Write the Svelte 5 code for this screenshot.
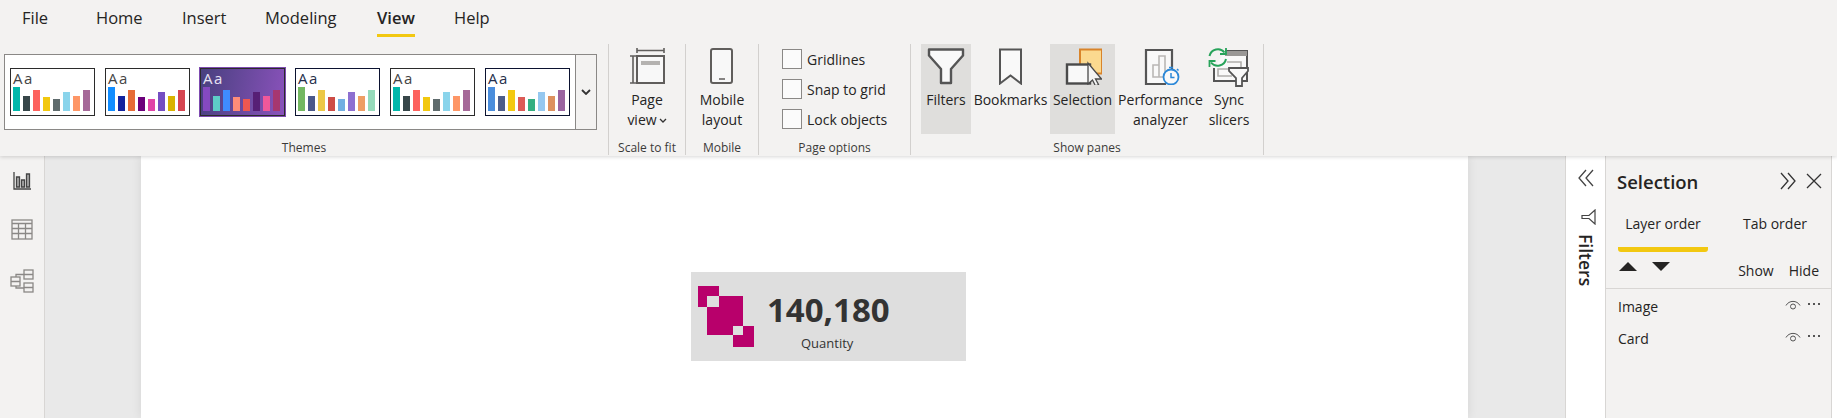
<script>
  const tabs = [
    { label: 'File', width: 74 },
    { label: 'Home', width: 86 },
    { label: 'Insert', width: 83 },
    { label: 'Modeling', width: 112 },
    { label: 'View', width: 77, active: true },
    { label: 'Help', width: 60 },
  ];

  const heights = [24, 15, 21, 14, 12, 19, 15, 21];
  const themes = [
    { colors: ['#01b8aa', '#374649', '#fd625e', '#f2c80f', '#5f6b6d', '#8ad4eb', '#fe9666', '#a66999'] },
    { colors: ['#118dff', '#12239e', '#e66c37', '#6b007b', '#e044a7', '#744ec2', '#d9b300', '#d64550'] },
    { dark: true, colors: ['#8549c0', '#5dcdc7', '#3f8cff', '#ff8c78', '#ee5750', '#571f75', '#f0589a', '#a63770'] },
    { navy: true, colors: ['#73b761', '#4a588a', '#ecc846', '#cd4c46', '#71afe2', '#8d6fd1', '#ee9e64', '#95dabb'] },
    { colors: ['#01b8aa', '#374649', '#fd625e', '#f2c80f', '#5f6b6d', '#8ad4eb', '#fe9666', '#a66999'] },
    { navy: true, colors: ['#4a8ddc', '#4c5d8a', '#f3c911', '#dc5b57', '#33ae81', '#95c8f0', '#dd915f', '#9a64a0'] },
  ];

  const layers = ['Image', 'Card'];
  const options = ['Gridlines', 'Snap to grid', 'Lock objects'];
</script>

<div class="app">
  <header class="ribbon">
    <nav class="tabs">
      {#each tabs as tab}
        <div class="tab" style="width: {tab.width}px">
          <span class="tab__text" class:tab__text--active={tab.active}>{tab.label}</span>
        </div>
      {/each}
    </nav>

    <div class="groups">
      <section class="group group--themes">
        <div class="group__body">
          <div class="gallery">
            <div class="gallery__items">
              {#each themes as theme}
                <div class="theme" class:theme--dark={theme.dark} class:theme--navy={theme.navy}>
                  <span class="theme__aa">Aa</span>
                  <div class="theme__bars">
                    {#each theme.colors as color, i}
                      <i style="height: {heights[i]}px; background: {color}"></i>
                    {/each}
                  </div>
                </div>
              {/each}
            </div>
            <div class="gallery__more">
              <svg width="10" height="6" viewBox="0 0 10 6"><path d="M1 1l4 4 4-4" fill="none" stroke="#333" stroke-width="1.8" /></svg>
            </div>
          </div>
        </div>
        <div class="group__label">Themes</div>
      </section>

      <section class="group group--scale">
        <div class="group__body">
          <div class="cmd">
            <svg class="cmd__icon" width="38" height="38" viewBox="0 0 38 38" fill="none" stroke="#605e5c" stroke-width="1.6">
              <path d="M9 3.500h27M9 1v5M36 1v5M2 9h6M2 36h6M5 9v27" />
              <rect x="9" y="9" width="27" height="27" fill="#f8f8f8" stroke-width="2" />
              <rect x="13" y="14" width="19" height="4" fill="#b5b3b1" stroke="none" />
            </svg>
            <span class="cmd__text">Page<br />view<svg class="caret" width="8" height="5" viewBox="0 0 8 5"><path d="M1 1l3 3 3-3" fill="none" stroke="#333" stroke-width="1.3" /></svg></span>
          </div>
        </div>
        <div class="group__label">Scale to fit</div>
      </section>

      <section class="group group--mobile">
        <div class="group__body">
          <div class="cmd">
            <svg class="cmd__icon" width="38" height="38" viewBox="0 0 38 38" fill="none" stroke="#605e5c" stroke-width="2">
              <rect x="8" y="2" width="21" height="34" rx="2" fill="#f8f8f8" />
              <path d="M16 32h6" stroke-width="1.5" />
            </svg>
            <span class="cmd__text">Mobile<br />layout</span>
          </div>
        </div>
        <div class="group__label">Mobile</div>
      </section>

      <section class="group group--options">
        <div class="group__body options">
          {#each options as option}
            <label class="check"><span class="check__box"></span>{option}</label>
          {/each}
        </div>
        <div class="group__label">Page options</div>
      </section>

      <section class="group group--panes">
        <div class="group__body panes">
          <div class="cmd cmd--on" style="width: 50px">
            <svg class="cmd__icon" width="38" height="38" viewBox="0 0 38 38" fill="#f9f9f9" stroke="#555" stroke-width="2.4">
              <path d="M2 2.500h34v6L24 22v14h-10V22L2 8.500z" stroke-linejoin="round" />
            </svg>
            <span class="cmd__text">Filters</span>
          </div>
          <div class="cmd" style="width: 79px">
            <svg class="cmd__icon" width="38" height="38" viewBox="0 0 38 38" fill="#f9f9f9" stroke="#555" stroke-width="2">
              <path d="M8 2.500h21v34l-10.500-8-10.500 8z" />
            </svg>
            <span class="cmd__text">Bookmarks</span>
          </div>
          <div class="cmd cmd--on" style="width: 65px">
            <svg class="cmd__icon" width="38" height="38" viewBox="0 0 38 38">
              <rect x="16" y="2.500" width="22" height="24" fill="#fbd98f" stroke="#d9842a" stroke-width="2" />
              <rect x="3" y="17.500" width="23" height="19" fill="#f9f9f9" stroke="#4a4a4a" stroke-width="2.4" />
              <path d="M24 16v21l4.500-4 3 6 3-1.500-3-5.500h6z" fill="#f4f4f4" stroke="#4a4a4a" stroke-width="1.3" />
            </svg>
            <span class="cmd__text">Selection</span>
          </div>
          <div class="cmd" style="width: 91px">
            <svg class="cmd__icon" width="38" height="38" viewBox="0 0 38 38" fill="none">
              <path d="M30 28V3H4v34h20" fill="#f9f9f9" stroke="#555" stroke-width="2.200" />
              <path d="M11 30V18h6v12zM17 30V9h6v21z" stroke="#b9b7b5" stroke-width="1.600" />
              <circle cx="29" cy="30" r="7.500" fill="#f9f9f9" stroke="#2b88d8" stroke-width="1.800" />
              <path d="M29 26v4.500h3.500M27 20.500h4M35 22l1.500 1.500" stroke="#2b88d8" stroke-width="1.500" />
            </svg>
            <span class="cmd__text">Performance<br />analyzer</span>
          </div>
          <div class="cmd" style="width: 46px">
            <svg class="cmd__icon cmd__icon--sync" width="42" height="40" viewBox="0 0 42 40" fill="none">
              <path d="M18 4h22v30H7V21" fill="#f9f9f9" stroke="#555" stroke-width="2" />
              <rect x="18" y="4" width="22" height="5" fill="#9a9896" />
              <path d="M20 15h14v7H11v7h14" stroke="#b0aeac" stroke-width="1.600" />
              <path d="M2.500 9a8.500 8.500 0 0 1 15-3.500M19 12a8.500 8.500 0 0 1-15 3.500" stroke="#27a35a" stroke-width="2" />
              <path d="M19 1v6h-6M2.500 20v-6h6" stroke="#27a35a" stroke-width="1.800" />
              <path d="M22 21h19v3l-6 7v8h-6v-8l-7-7z" fill="#f9f9f9" stroke="#555" stroke-width="1.800" />
            </svg>
            <span class="cmd__text">Sync<br />slicers</span>
          </div>
        </div>
        <div class="group__label">Show panes</div>
      </section>
    </div>
  </header>

  <main class="main">
    <aside class="rail">
      <svg width="20" height="20" viewBox="0 0 20 20" fill="none" stroke="#444" stroke-width="1.300">
        <path d="M2 1v17h17" />
        <path d="M4.500 6h3v10h-3zM9.500 9h3v7h-3zM14.500 3h3v13h-3z" fill="#aaa" />
      </svg>
      <svg width="22" height="22" viewBox="0 0 22 22" fill="none" stroke="#8a8886" stroke-width="1.300">
        <rect x="1" y="1" width="20" height="19" />
        <path d="M1 4.500h20M1 9.500h20M1 14.500h20M7.500 4.500V20M14.500 4.500V20" />
      </svg>
      <svg width="24" height="24" viewBox="0 0 24 24" fill="none" stroke="#8a8886" stroke-width="1.300">
        <rect x="1" y="8" width="9" height="9" />
        <rect x="14" y="1" width="9" height="9" />
        <rect x="14" y="14" width="9" height="9" />
        <path d="M1 12.500h9M14 5.500h9M14 18.500h9M6 8V5.500h8M6 17v2h8" />
      </svg>
    </aside>

    <div class="workspace">
      <div class="page">
        <div class="card">
          <div class="card__logo">
            <i class="logo logo--a"></i>
            <i class="logo logo--b"></i>
            <i class="logo logo--c"></i>
            <i class="logo logo--gap1"></i>
            <i class="logo logo--gap2"></i>
          </div>
          <div class="card__value">140,180</div>
          <div class="card__name">Quantity</div>
        </div>
      </div>
    </div>

    <aside class="strip">
      <svg class="strip__chev" width="16" height="18" viewBox="0 0 16 18" fill="none" stroke="#444" stroke-width="1.300">
        <path d="M8 1L1 9l7 8M15 1L8 9l7 8" />
      </svg>
      <svg class="strip__funnel" width="15" height="16" viewBox="0 0 15 16" fill="none" stroke="#444" stroke-width="1.200">
        <path d="M14 1v14L8 9.500H1v-3h7z" />
      </svg>
      <div class="strip__label">Filters</div>
    </aside>

    <aside class="pane">
      <div class="pane__head">
        <span class="pane__title">Selection</span>
        <svg width="16" height="18" viewBox="0 0 16 18" fill="none" stroke="#333" stroke-width="1.300">
          <path d="M1 1l7 8-7 8M8 1l7 8-7 8" />
        </svg>
        <svg width="16" height="16" viewBox="0 0 16 16" fill="none" stroke="#333" stroke-width="1.300">
          <path d="M1 1l14 14M15 1L1 15" />
        </svg>
      </div>
      <div class="pane__tabs">
        <span class="pane__tab pane__tab--active">Layer order</span>
        <span class="pane__tab">Tab order</span>
      </div>
      <div class="pane__tools">
        <svg width="18" height="9" viewBox="0 0 18 9"><path d="M9 0l9 9H0z" fill="#252423" /></svg>
        <svg width="18" height="9" viewBox="0 0 18 9"><path d="M0 0h18l-9 9z" fill="#252423" /></svg>
        <span class="pane__show">Show</span>
        <span class="pane__hide">Hide</span>
      </div>
      <ul class="pane__list">
        {#each layers as layer}
          <li>
            <span class="pane__name">{layer}</span>
            <svg width="16" height="11" viewBox="0 0 16 11" fill="none" stroke="#555" stroke-width="1">
              <path d="M1 5.500C4 0 12 0 15 5.500" />
              <circle cx="8" cy="6.500" r="2.500" />
            </svg>
            <span class="pane__dots"><i></i><i></i><i></i></span>
          </li>
        {/each}
      </ul>
    </aside>
    <div class="tail"></div>
  </main>
</div>

<style>
  :global(body) {
    margin: 0;
    background: #fff;
  }

  .app {
    width: 1837px;
    height: 418px;
    display: flex;
    flex-direction: column;
    overflow: hidden;
    font-family: "Open Sans", "Noto Sans", sans-serif;
    color: #252423;
  }

  .ribbon {
    position: relative;
    z-index: 2;
    height: 156px;
    flex: none;
    background: #f3f2f1;
    box-shadow: 0 1px 4px rgba(0, 0, 0, 0.16);
  }

  .tabs {
    height: 44px;
    display: flex;
    padding-left: 22px;
    box-sizing: border-box;
    font-size: 16.500px;
  }

  .tab__text {
    display: inline-block;
    height: 37px;
    line-height: 36px;
    box-sizing: border-box;
  }

  .tab__text--active {
    font-weight: 600;
    border-bottom: 3px solid #f2c811;
  }

  .groups {
    display: flex;
    height: 111px;
  }

  .group {
    display: flex;
    flex-direction: column;
    box-sizing: border-box;
    border-right: 1px solid #d2d0ce;
  }

  .group--themes { width: 609px; }
  .group--scale { width: 77px; }
  .group--mobile { width: 73px; }
  .group--options { width: 152px; }
  .group--panes { width: 353px; }

  .group__body {
    height: 96px;
  }

  .group__label {
    height: 15px;
    line-height: 16px;
    font-size: 12px;
    text-align: center;
    color: #3b3a39;
  }

  .gallery {
    display: flex;
    margin: 10px 0 0 4px;
    width: 593px;
    height: 76px;
    box-sizing: border-box;
    border: 1.5px solid #8a8886;
    background: #fff;
  }

  .gallery__items {
    display: flex;
    gap: 10px;
    width: 570px;
    box-sizing: border-box;
    padding: 12.5px 0 0 4.500px;
  }

  .gallery__more {
    flex: 1;
    display: flex;
    align-items: center;
    justify-content: center;
    background: #f3f2f1;
    border-left: 1.5px solid #8a8886;
  }

  .theme {
    width: 85px;
    height: 48px;
    box-sizing: border-box;
    border: 1.5px solid #2b2b2b;
    position: relative;
    background: #fff;
  }

  .theme--navy { border-color: #0b1230; }

  .theme--dark {
    background: linear-gradient(100deg, #48407f, #8a52bb);
    outline: 1px solid #7e4bb0;
    color: #e8e4f4;
  }

  .theme__aa {
    display: block;
    height: 17px;
    padding-left: 2.500px;
    font-size: 15px;
    line-height: 19px;
    letter-spacing: 1.500px;
    color: #444;
  }

  .theme--navy .theme__aa { color: #252e4a; }
  .theme--dark .theme__aa { color: #e8e4f4; }

  .theme__bars {
    position: absolute;
    left: 2.500px;
    bottom: 3.500px;
    display: flex;
    align-items: flex-end;
    gap: 3px;
  }

  .theme__bars i {
    display: block;
    width: 7px;
  }

  .cmd {
    height: 90px;
    display: flex;
    flex-direction: column;
    align-items: center;
    box-sizing: border-box;
    padding-top: 3px;
    flex: none;
  }

  .cmd--on { background: #dfdedc; }

  .cmd__icon {
    height: 38px;
    flex: none;
  }

  .cmd__icon--sync {
    height: 40px;
    margin: 0 0 -2px -3px;
  }

  .cmd__text {
    margin-top: 5px;
    font-size: 14px;
    line-height: 20px;
    text-align: center;
    white-space: nowrap;
  }

  .caret {
    margin-left: 2px;
    vertical-align: 2px;
  }

  .options {
    display: flex;
    flex-direction: column;
    gap: 10px;
    padding: 5px 0 0 23px;
    box-sizing: border-box;
  }

  .check {
    display: flex;
    align-items: center;
    gap: 5px;
    height: 20px;
    font-size: 14px;
  }

  .check__box {
    width: 20px;
    height: 20px;
    box-sizing: border-box;
    border: 1px solid #8a8886;
    background: #fbfbfb;
  }

  .panes {
    display: flex;
    gap: 0;
    padding: 0 0 0 10px;
    box-sizing: border-box;
  }

  .main {
    flex: 1;
    display: flex;
    min-height: 0;
  }

  .rail {
    width: 45px;
    flex: none;
    box-sizing: border-box;
    background: #f3f2f1;
    border-right: 1px solid #d8d6d4;
    display: flex;
    flex-direction: column;
    align-items: center;
    gap: 28px;
    padding: 15px 1px 0 0;
  }

  .workspace {
    flex: 1;
    min-width: 0;
    background: #e9e9e9;
    padding: 0 97px 0 96px;
  }

  .page {
    position: relative;
    height: 100%;
    background: #fff;
    box-shadow: 0 0 10px rgba(0, 0, 0, 0.09);
  }

  .card {
    position: absolute;
    left: 550px;
    top: 116px;
    width: 275px;
    height: 89px;
    background: #dedede;
  }

  .card__logo {
    position: absolute;
    inset: 0;
  }

  .logo {
    position: absolute;
    display: block;
    background: #b8006b;
  }

  .logo--a { left: 7px; top: 14px; width: 21px; height: 21px; }
  .logo--b { left: 16px; top: 24px; width: 36px; height: 39px; }
  .logo--c { left: 42px; top: 54px; width: 21px; height: 21px; }
  .logo--gap1 { left: 16px; top: 24px; width: 12px; height: 11px; background: #dedede; }
  .logo--gap2 { left: 42px; top: 54px; width: 10px; height: 9px; background: #dedede; }

  .card__value {
    position: absolute;
    left: 76px;
    top: 16px;
    font-size: 33px;
    line-height: 44px;
    font-weight: 700;
    color: #333;
    white-space: nowrap;
  }

  .card__name {
    position: absolute;
    left: 110px;
    top: 62px;
    font-size: 13px;
    line-height: 18px;
    color: #333;
  }

  .strip {
    width: 41px;
    flex: none;
    box-sizing: border-box;
    background: #fff;
    border-left: 1px solid #d8d6d4;
    border-right: 1px solid #d8d6d4;
    display: flex;
    flex-direction: column;
    align-items: center;
  }

  .strip__chev {
    margin: 13px 0 0 0;
    flex: none;
  }

  .strip__funnel {
    margin: 22px 0 0 6px;
    flex: none;
  }

  .strip__label {
    margin: 9px 0 0 0;
    writing-mode: vertical-rl;
    font-size: 17.500px;
    font-weight: 600;
    line-height: 20px;
  }

  .pane {
    width: 226px;
    flex: none;
    box-sizing: border-box;
    background: #f3f2f1;
    border-right: 1px solid #d8d6d4;
  }

  .pane__head {
    height: 50px;
    display: flex;
    align-items: center;
    padding: 0 9px 0 11px;
  }

  .pane__title {
    flex: 1;
    font-size: 18.500px;
    font-weight: 600;
  }

  .pane__head svg + svg {
    margin-left: 10px;
  }

  .pane__tabs {
    display: flex;
    height: 46px;
    padding-left: 12px;
    font-size: 14px;
  }

  .pane__tab {
    flex: none;
    box-sizing: border-box;
    height: 46px;
    line-height: 36px;
    text-align: center;
    white-space: nowrap;
    width: 122px;
  }

  .pane__tab--active {
    width: 90px;
    margin-right: 6px;
    border-bottom: 5px solid #f2c811;
    border-radius: 3px;
  }

  .pane__tools {
    height: 36px;
    display: flex;
    align-items: center;
    gap: 15px;
    padding: 0 12px 0 13px;
    font-size: 14px;
    border-bottom: 1px solid #d8d6d4;
  }

  .pane__tools svg {
    margin-top: -8px;
  }

  .pane__show {
    margin-left: auto;
  }

  .pane__list {
    list-style: none;
    margin: 0;
    padding: 1px 0 0;
  }

  .pane__list li {
    height: 32px;
    display: flex;
    align-items: center;
    padding: 0 11px 0 12px;
    font-size: 14px;
  }

  .pane__name {
    flex: 1;
  }

  .pane__list svg {
    margin: -2px 7px 0 0;
  }

  .pane__dots {
    display: flex;
    gap: 3px;
    margin-top: -4px;
  }

  .pane__dots i {
    display: block;
    width: 2px;
    height: 2px;
    background: #555;
  }

  .tail {
    width: 5px;
    flex: none;
    background: #fff;
  }
</style>
